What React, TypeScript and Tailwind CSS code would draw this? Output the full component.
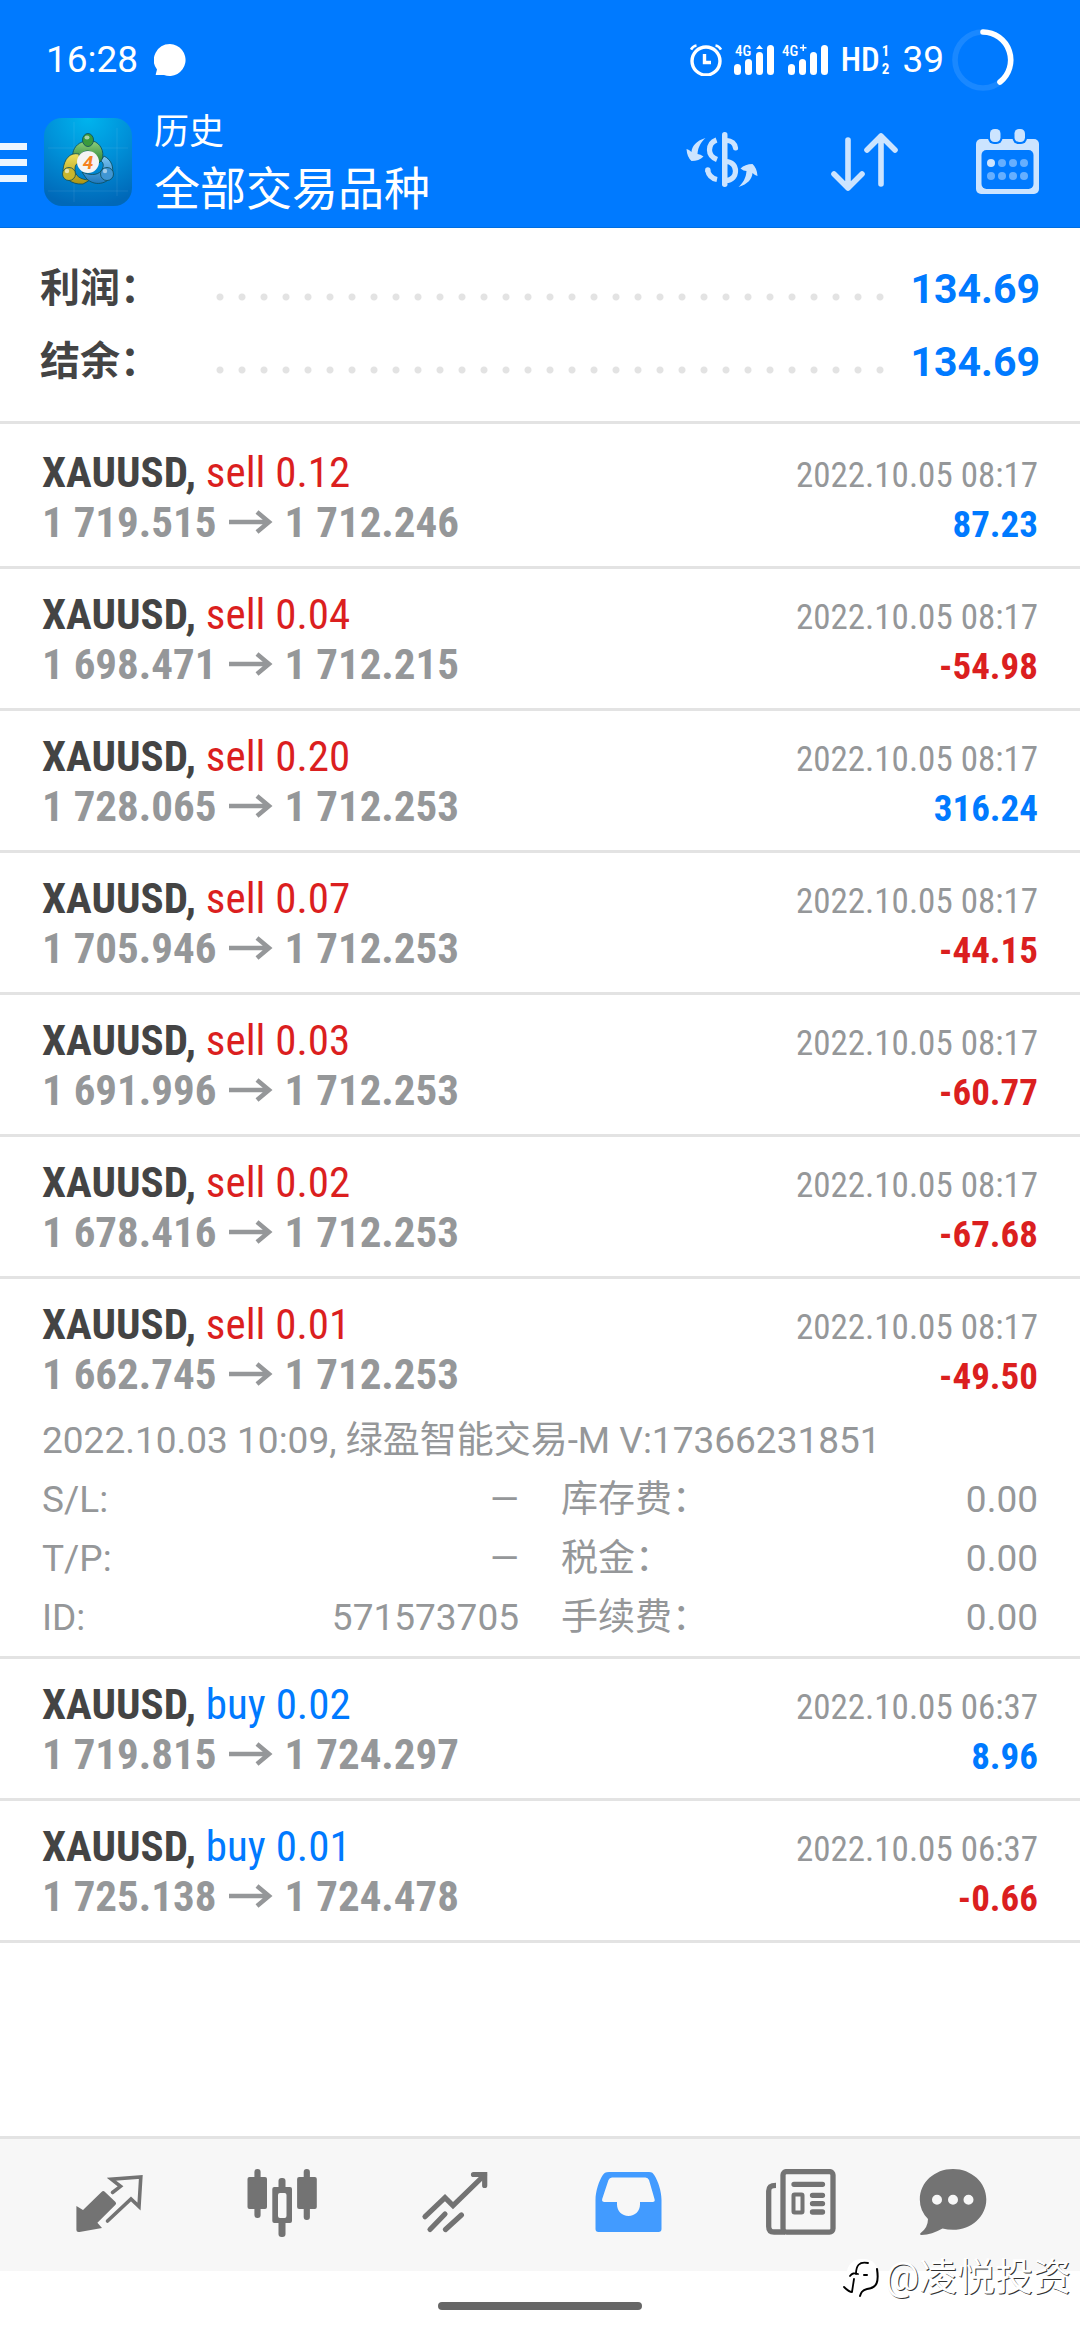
import React from "react";

type Deal = {
  side: "buy" | "sell";
  volume: string;
  open: string;
  close: string;
  time: string;
  profit: string;
  expanded?: boolean;
};

const deals: Deal[] = [
  { side: "sell", volume: "0.12", open: "1 719.515", close: "1 712.246", time: "2022.10.05 08:17", profit: "87.23" },
  { side: "sell", volume: "0.04", open: "1 698.471", close: "1 712.215", time: "2022.10.05 08:17", profit: "-54.98" },
  { side: "sell", volume: "0.20", open: "1 728.065", close: "1 712.253", time: "2022.10.05 08:17", profit: "316.24" },
  { side: "sell", volume: "0.07", open: "1 705.946", close: "1 712.253", time: "2022.10.05 08:17", profit: "-44.15" },
  { side: "sell", volume: "0.03", open: "1 691.996", close: "1 712.253", time: "2022.10.05 08:17", profit: "-60.77" },
  { side: "sell", volume: "0.02", open: "1 678.416", close: "1 712.253", time: "2022.10.05 08:17", profit: "-67.68" },
  { side: "sell", volume: "0.01", open: "1 662.745", close: "1 712.253", time: "2022.10.05 08:17", profit: "-49.50", expanded: true },
  { side: "buy", volume: "0.02", open: "1 719.815", close: "1 724.297", time: "2022.10.05 06:37", profit: "8.96" },
  { side: "buy", volume: "0.01", open: "1 725.138", close: "1 724.478", time: "2022.10.05 06:37", profit: "-0.66" },
];

const details = [
  { label: "S/L:", value: "—" },
  { label: "库存费：", value: "0.00" },
  { label: "T/P:", value: "—" },
  { label: "税金：", value: "0.00" },
  { label: "ID:", value: "571573705" },
  { label: "手续费：", value: "0.00" },
];

const StatusBar: React.FC = () => (
  <div className="flex h-[105px] items-center pt-[15px] pr-[66px] pl-[46px] text-[37px] leading-[40px]">
    <span>16:28</span>
    <svg className="ml-[16px]" width="32" height="34" viewBox="0 0 32 34" fill="currentColor">
      <path d="M16 1a16 16 0 1 1-6 31H2.500c-.8 0-1-.6-.6-1.200L3 26.500A16 16 0 0 1 16 1z" />
    </svg>
    <svg className="ml-auto" width="32" height="32" viewBox="0 0 32 32" fill="none" stroke="currentColor">
      <circle cx="16" cy="17" r="14" strokeWidth="3.400" />
      <path d="M14.500 10v8.500H21" strokeWidth="3.400" />
      <path d="M1 5.500Q3 2 6.500 1.500M31 5.500Q29 2 25.500 1.500" strokeWidth="2.600" />
    </svg>
    <svg className="ml-[12px]" width="94" height="46" viewBox="0 -8 94 46" fill="currentColor">
      <rect x="0" y="19" width="7" height="11" rx="3.500" />
      <rect x="11" y="14" width="7" height="16" rx="3.500" />
      <rect x="22" y="7" width="7" height="23" rx="3.500" />
      <path d="M22 4l3.500-4L29 4z" />
      <rect x="33" y="0" width="7" height="30" rx="3.500" />
      <text x="1" y="11" className="font-['Roboto_Condensed','Roboto',sans-serif] text-[15px] font-medium">4G</text>
      <rect x="54" y="19" width="7" height="11" rx="3.500" />
      <rect x="65" y="14" width="7" height="16" rx="3.500" />
      <rect x="76" y="7" width="7" height="23" rx="3.500" />
      <rect x="87" y="0" width="7" height="30" rx="3.500" />
      <text x="48" y="11" className="font-['Roboto_Condensed','Roboto',sans-serif] text-[15px] font-medium">4G</text>
      <path d="M66 2h2.500v-2.500h1.500V2h2.500v1.500H70V6h-1.500V3.500H66z" />
    </svg>
    <span className="ml-[13px] font-['Roboto_Condensed','Roboto',sans-serif] text-[33px] font-medium">HD</span>
    <span className="ml-[2px] flex flex-col font-['Roboto_Condensed','Roboto',sans-serif] text-[15px] leading-[18px] font-bold">
      <span>1</span>
      <span>2</span>
    </span>
    <span className="ml-[13px]">39</span>
    <svg className="ml-[8px]" width="62" height="62" viewBox="0 0 62 62" fill="none" strokeWidth="5.600">
      <circle cx="31" cy="31" r="28" stroke="#1a88ff" />
      <path d="M31 3A28 28 0 0 1 48 53" stroke="#fff" strokeLinecap="round" />
    </svg>
  </div>
);

const Logo: React.FC = () => (
  <svg className="shrink-0" width="88" height="88" viewBox="0 0 88 88">
    <defs>
      <radialGradient id="logoBg" cx=".5" cy="0" r="1">
        <stop offset="0" stopColor="#00b4ee" />
        <stop offset=".5" stopColor="#0090d8" />
        <stop offset="1" stopColor="#0068b8" />
      </radialGradient>
      <linearGradient id="green" x2="0" y2="1">
        <stop offset="0" stopColor="#8fd07c" />
        <stop offset="1" stopColor="#1f7a2c" />
      </linearGradient>
      <linearGradient id="yellow" x2="0" y2="1">
        <stop offset="0" stopColor="#efe05c" />
        <stop offset="1" stopColor="#a99314" />
      </linearGradient>
      <linearGradient id="blue" x2="0" y2="1">
        <stop offset="0" stopColor="#7cc6f2" />
        <stop offset="1" stopColor="#1f78bd" />
      </linearGradient>
    </defs>
    <rect width="88" height="88" rx="18" fill="url(#logoBg)" />
    <path d="M30 4v80M73 10v68M4 30h80M4 73h80" stroke="#fff" strokeOpacity=".08" />
    <g strokeWidth="1" stroke="#0d4b58" strokeOpacity=".8">
      <path d="M38 24C31 27 28 33 29 39L35 40C36 36 39 33 44 33C49 34 53 38 53 47L58 42C61 33 56 25 49 23z" fill="url(#green)" />
      <path d="M35 36C26 34 20 41 19 52C19 59 27 67 39 66L46 62C37 62 30 58 31 50C31 47 33 45 36 44z" fill="url(#yellow)" />
      <path d="M60 38C68 42 70 50 68 57C64 66 50 69 42 60L38 54C45 57 53 58 57 53C60 49 60 45 57 43z" fill="url(#blue)" />
      <ellipse cx="44" cy="22" rx="5.500" ry="6.500" fill="#3a9a3e" />
      <circle cx="25" cy="56" r="6.500" fill="#c9b62e" />
      <circle cx="63" cy="56" r="6.500" fill="#4096d3" />
    </g>
    <ellipse cx="43" cy="19.500" rx="2.500" ry="2" fill="#fff" opacity=".55" />
    <circle cx="23" cy="53" r="2.200" fill="#fff" opacity=".6" />
    <circle cx="61" cy="53" r="2.200" fill="#fff" opacity=".5" />
    <circle cx="44" cy="44" r="11" fill="#f4f4f4" />
    <text x="44" y="51" textAnchor="middle" fill="#f58220" className="font-['Roboto',sans-serif] text-[19px] font-bold italic">4</text>
  </svg>
);

const Header: React.FC = () => (
  <header className="border-b border-[#006ee0] bg-[#007aff] pb-[8px] text-white">
    <StatusBar />
    <div className="flex h-[114px] items-center pr-[36px]">
      <button aria-label="菜单" className="flex w-[27px] flex-col gap-[9px]">
        <span className="h-[7px] bg-[#ebf5ff]" />
        <span className="h-[7px] bg-[#ebf5ff]" />
        <span className="h-[7px] bg-[#ebf5ff]" />
      </button>
      <div className="ml-[17px]">
        <Logo />
      </div>
      <div className="ml-[22px] flex-1">
        <p className="text-[35px] leading-[54px]">历史</p>
        <h1 className="text-[46px] leading-[58px]">全部交易品种</h1>
      </div>
      <div className="flex gap-[71px] text-[#cce4ff]">
        <button aria-label="货币" className="flex w-[72px] items-center justify-center">
          <svg width="72" height="60" viewBox="0 0 72 60" fill="currentColor">
            <rect x="36" y="0" width="5.500" height="55" rx="2.700" />
            <g fill="none" stroke="currentColor" strokeWidth="5.200">
              <path d="M40 8.500C46 8.500 49 12 49.500 16" strokeLinecap="round" />
              <path d="M40 29.500C46 29.500 49.500 34 49.500 39S46 48.500 40 48.500" />
              <path d="M30.500 8C25 10 23.500 14 23.500 18S26 25.500 31 27.500" />
              <path d="M21.500 38C22.500 43 26 46.500 31 47.500" />
            </g>
            <circle cx="21.800" cy="38" r="2.700" />
            <path id="swing" d="M19.500 6C10 9 6 14 5.500 20Q3 17.500 .5 17Q1 25 5.500 29Q13 29 17.500 24.500Q14.500 22 11.500 22C12 15 15 10 19.500 6z" />
            <use href="#swing" transform="rotate(180 36 30.500)" />
          </svg>
        </button>
        <button aria-label="排序" className="flex w-[72px] items-center justify-center">
          <svg width="68" height="60" viewBox="0 0 68 60" fill="none" stroke="currentColor" strokeWidth="5.600" strokeLinecap="round" strokeLinejoin="round">
            <path d="M17 8v48M3 42l14 14 14-14" />
            <path d="M50 52V4M36 18L50 4l14 14" />
          </svg>
        </button>
        <button aria-label="日期" className="flex w-[72px] items-center justify-center">
          <svg width="64" height="66" viewBox="0 0 64 66" fill="currentColor">
            <rect x="0" y="10" width="63" height="55" rx="5" />
            <rect x="5.500" y="21" width="52" height="39" rx="5" fill="#007aff" />
            <rect x="12" y="-2" width="14.500" height="17" rx="6" fill="#007aff" />
            <rect x="36.500" y="-2" width="14.500" height="17" rx="6" fill="#007aff" />
            <rect x="14" y="0" width="10.500" height="13" rx="4.500" />
            <rect x="38.500" y="0" width="10.500" height="13" rx="4.500" />
            <circle cx="15" cy="34" r="4" />
            <g fillOpacity=".5">
              <circle cx="26" cy="34" r="4" />
              <circle cx="37" cy="34" r="4" />
              <circle cx="48" cy="34" r="4" />
              <circle cx="15" cy="47" r="4" />
              <circle cx="26" cy="47" r="4" />
              <circle cx="37" cy="47" r="4" />
              <circle cx="48" cy="47" r="4" />
            </g>
          </svg>
        </button>
      </div>
    </div>
  </header>
);

const SummaryRow: React.FC<{ label: string; value: string }> = ({ label, value }) => (
  <div className="flex h-[73px] items-center font-bold">
    <dt className="w-[169px] text-[40px] leading-[48px] text-[#444444]">{label}</dt>
    <span className="mt-[16px] h-[8px] flex-1 bg-[radial-gradient(circle,#e3e3e3_3px,transparent_4px)] bg-[length:22px_8px]" />
    <dd className="ml-[20px] text-[41px] leading-[48px] text-[#007aff]">{value}</dd>
  </div>
);

const DealRow: React.FC<{ deal: Deal }> = ({ deal }) => (
  <li className="border-b-[3px] border-[#e3e3e3] px-[42px] pt-[20px]">
    <div className="flex h-[50px] items-baseline justify-between font-['Roboto_Condensed','Roboto',sans-serif] leading-[50px]">
      <p className="text-[43px]">
        <span className="font-bold text-[#444444]">XAUUSD, </span>
        <span className={deal.side === "sell" ? "text-[#db1f1f]" : "text-[#007aff]"}>
          {deal.side} {deal.volume}
        </span>
      </p>
      <p className="text-[35px] text-[#959799]">{deal.time}</p>
    </div>
    <div className="flex h-[50px] items-baseline justify-between font-['Roboto_Condensed','Roboto',sans-serif] leading-[50px] font-bold">
      <p className="flex items-center text-[43px] text-[#959799]">
        {deal.open}
        <svg className="mx-[12px]" width="44" height="24" viewBox="0 0 44 24" fill="none" stroke="currentColor" strokeWidth="4.500">
          <path d="M0 12h39M28 2l12 10-12 10" />
        </svg>
        {deal.close}
      </p>
      <p className={deal.profit.startsWith("-") ? "text-[37px] text-[#db1f1f]" : "text-[37px] text-[#007aff]"}>{deal.profit}</p>
    </div>
    {deal.expanded ? (
      <div className="pt-[12px] pb-[9px] text-[37px] leading-[59px] text-[#959799]">
        <p>2022.10.03 10:09, 绿盈智能交易-M V:17366231851</p>
        <dl className="grid grid-cols-2 gap-x-[42px]">
          {details.map((item) => (
            <div key={item.label} className="flex justify-between">
              <dt>{item.label}</dt>
              <dd>{item.value}</dd>
            </div>
          ))}
        </dl>
      </div>
    ) : (
      <div className="h-[19px]" />
    )}
  </li>
);

const BottomNav: React.FC = () => (
  <nav className="grid h-[135px] grid-cols-[repeat(5,173fr)_132fr] items-center justify-items-center border-t-[3px] border-[#e3e3e3] bg-[#f7f7f7] pr-[61px] pl-[22px] text-[#737373]">
    <button aria-label="行情">
      <svg width="72" height="72" viewBox="0 0 72 72" fill="currentColor">
        <path d="M3.400 37L10 41L28.500 23Q30.300 21 32 23L42.500 33Q43.800 34.500 42.500 35.800L24.400 53.700L29 59L6.500 63Q3.400 63.500 3.400 61z" />
        <path d="M39.500 23.500L47.500 17.300L38.500 10.300L67.800 8L66 37.500L58 30L34.500 52" fill="none" stroke="currentColor" strokeWidth="3.600" strokeLinecap="round" />
      </svg>
    </button>
    <button aria-label="图表">
      <svg width="72" height="72" viewBox="0 0 72 72" fill="currentColor">
        <rect x="8.400" y="0" width="6.200" height="49" rx="3" />
        <rect x="1.500" y="8" width="19.500" height="32" rx="2" />
        <rect x="32.500" y="9" width="7" height="59" rx="3" />
        <rect x="26.300" y="18" width="19.700" height="36" rx="2" />
        <rect x="32" y="24" width="8.500" height="25" rx="2" fill="#f7f7f7" />
        <rect x="57.700" y="0" width="6.200" height="51" rx="3" />
        <rect x="51.100" y="8" width="19.700" height="32" rx="2" />
      </svg>
    </button>
    <button aria-label="交易">
      <svg width="72" height="72" viewBox="0 0 72 72" fill="none" stroke="currentColor" strokeWidth="5.200" strokeLinecap="round">
        <path d="M6 47.700L26 28.700L34 36.500L65.500 6" />
        <path d="M54.500 5.500H65.700V16.500" />
        <path d="M26 45L11 60.500M42.400 46L26.500 60.500" />
      </svg>
    </button>
    <button aria-label="历史" className="text-[#429bff]">
      <svg width="72" height="72" viewBox="0 0 72 72" fill="currentColor">
        <path
          fillRule="evenodd"
          d="M17 3H57C60 3 61 4 62.500 6.500C66 12 69.500 22 69.500 31V60Q69.500 63 66.500 63H6.500Q3.500 63 3.500 60V31C3.500 22 7 12 10.500 6.500C12 4 13.500 3 17 3zM20 8.500Q17.500 8.500 16.500 11L10.200 30Q9.500 33 12.500 33H25V35.500C25 42 30 47 36.500 47S48 42 48 35.500V33H60.500Q63.500 33 62.500 30L57 11Q56 8.500 53.500 8.500z"
        />
      </svg>
    </button>
    <button aria-label="新闻">
      <svg width="72" height="72" viewBox="0 0 72 72" fill="none" stroke="currentColor" strokeWidth="5.300">
        <rect x="18" y="2.600" width="50" height="60.500" rx="3.500" />
        <path d="M11 16.300C6 16.300 3.700 18 3.700 22V57.500C3.700 61 5.500 63 9 63H20" />
        <path d="M29 15.300H57.500M47.500 26.300H57.500M47.500 34.600H57.500M47.500 43H57.500" strokeLinecap="round" />
        <rect x="28.500" y="25.500" width="9" height="18" rx="1" strokeWidth="4" />
      </svg>
    </button>
    <button aria-label="消息">
      <svg width="72" height="72" viewBox="0 0 72 72" fill="currentColor">
        <path
          fillRule="evenodd"
          d="M36 0C54.500 0 69.300 13.500 69.300 30.400S54.500 60.700 36 60.700Q30.500 60.700 25.500 59.500Q15 65.500 4.500 66Q2 65.700 3.700 64Q11 58.500 11 50Q2.800 41.500 2.800 30.400C2.800 13.500 17.500 0 36 0zM20 25.700a5 5 0 1 0 0 10 5 5 0 0 0 0-10zM36 25.700a5 5 0 1 0 0 10 5 5 0 0 0 0-10zM51.500 25.700a5 5 0 1 0 0 10 5 5 0 0 0 0-10z"
        />
      </svg>
    </button>
  </nav>
);

export default function App() {
  return (
    <div className="flex min-h-screen flex-col bg-white font-['Roboto','Noto_Sans_CJK_SC',sans-serif]">
      <Header />
      <main className="flex-1">
        <dl className="border-b-[3px] border-[#e3e3e3] px-[40px] pt-[24px] pb-[23px]">
          <SummaryRow label="利润：" value="134.69" />
          <SummaryRow label="结余：" value="134.69" />
        </dl>
        <ul className="pt-[3px]">
          {deals.map((deal) => (
            <DealRow key={deal.open} deal={deal} />
          ))}
        </ul>
      </main>
      <footer className="relative">
        <BottomNav />
        <div className="flex h-[69px] justify-center pt-[31px]">
          <span className="h-[8px] w-[204px] rounded-full bg-[#666666]" />
        </div>
        <div className="absolute right-[9px] bottom-[36px] flex items-center gap-[4px] text-white">
          <svg width="38" height="44" viewBox="0 0 38 44" fill="none" strokeLinecap="round" strokeLinejoin="round">
            <path d="M5 26C0 12 10 3 20 4C32 4 36 12 35 24C33 36 26 34 18 40L4 34z" fill="#fff" />
            <path d="M25 8C16 6 13 11 13 19M7 21C9 18 11 18 15 19M11 24L9 37C6 37 3 34 1 32" stroke="#000" strokeWidth="1.800" />
            <path d="M34 14C36 27 34 33 24 34C19 35 18 38 17 41M21 20h3" stroke="#000" strokeWidth="2" />
          </svg>
          <span className="text-[38px] leading-[54px] [text-shadow:1px_1px_0_#333333]">@凌悦投资</span>
        </div>
      </footer>
    </div>
  );
}
